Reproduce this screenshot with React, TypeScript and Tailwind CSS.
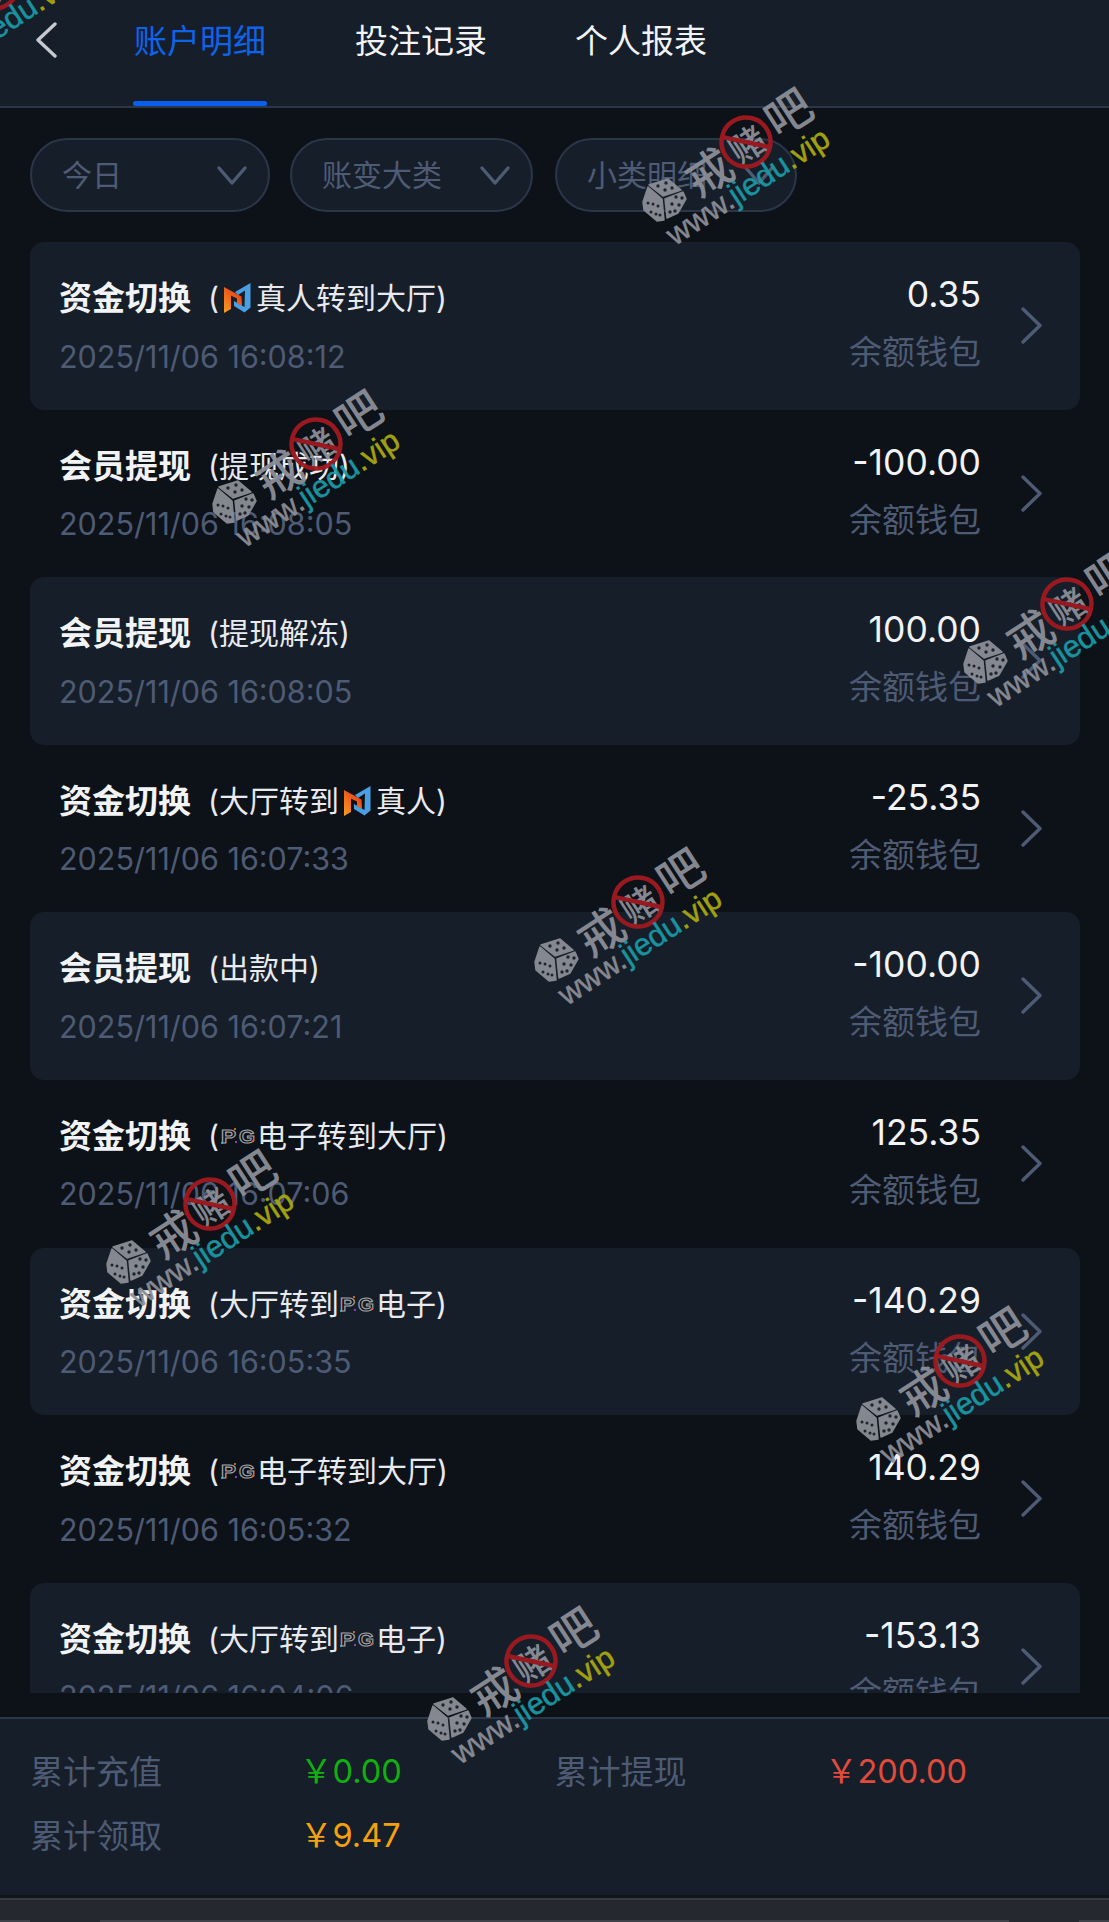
const rows = [
  { title: "资金切换", kind: "真人转到大厅", icon: "n-first", date: "2025/11/06 16:08:12", amount: "0.35" },
  { title: "会员提现", kind: "提现成功", date: "2025/11/06 16:08:05", amount: "-100.00" },
  { title: "会员提现", kind: "提现解冻", date: "2025/11/06 16:08:05", amount: "100.00" },
  { title: "资金切换", kind: "大厅转到|真人", icon: "n-mid", date: "2025/11/06 16:07:33", amount: "-25.35" },
  { title: "会员提现", kind: "出款中", date: "2025/11/06 16:07:21", amount: "-100.00" },
  { title: "资金切换", kind: "电子转到大厅", icon: "pg-first", date: "2025/11/06 16:07:06", amount: "125.35" },
  { title: "资金切换", kind: "大厅转到|电子", icon: "pg-mid", date: "2025/11/06 16:05:35", amount: "-140.29" },
  { title: "资金切换", kind: "电子转到大厅", icon: "pg-first", date: "2025/11/06 16:05:32", amount: "140.29" },
  { title: "资金切换", kind: "大厅转到|电子", icon: "pg-mid", date: "2025/11/06 16:04:06", amount: "-153.13" },
]

const marks = [
  "left-[-87px] top-[42px]",
  "left-[665px] top-[200px]",
  "left-[235px] top-[502px]",
  "left-[986px] top-[662px]",
  "left-[557px] top-[960px]",
  "left-[129px] top-[1262px]",
  "left-[879px] top-[1419px]",
  "left-[450px] top-[1719px]",
]

const NIcon = () => (
  <svg width="27" height="30" viewBox="0 0 27 30" className="shrink-0">
    <defs>
      <linearGradient id="nOrange" x1="0" y1="1" x2="0.7" y2="0">
        <stop offset="0" stopColor="#f8a020" />
        <stop offset="1" stopColor="#e63a1a" />
      </linearGradient>
    </defs>
    <path d="M26.5 0 L26.5 24.5 L20.5 29.5 L10 23 L10 18 L20.5 24 L21 7.5 L14 12 L11 9 Z" fill="#4a9fe0" />
    <path d="M0 4 L17.5 13.5 L18 23 L13 20 L13 15.5 L7 12.5 L7 26 L0 30 Z" fill="url(#nOrange)" />
  </svg>
)

const PgIcon = () => (
  <svg width="36" height="18" viewBox="0 0 36 18" className="shrink-0">
    <g fontSize="19" fontWeight="700" fontFamily="'Liberation Sans', sans-serif" fill="#0b0e14" stroke="#a4a4a8" strokeWidth="1.1">
      <text x="1" y="16" textLength="15" lengthAdjust="spacingAndGlyphs">P</text>
      <text x="19" y="16" textLength="16" lengthAdjust="spacingAndGlyphs">G</text>
    </g>
    <circle cx="2" cy="16" r="1" fill="#35c3e8" />
    <circle cx="15" cy="2" r="1" fill="#f08a24" />
    <circle cx="16" cy="15" r="1" fill="#b44fd8" />
    <circle cx="33" cy="14" r="1.1" fill="#f0552a" />
  </svg>
)

const Chevron = ({ dir, className }: { dir: "left" | "right" | "down"; className: string }) => {
  const d = dir === "left" ? "M20 2 L3 18 L20 34" : dir === "right" ? "M3 2 L20 18.5 L3 35" : "M2 2 L15 17 L28 2"
  const box = dir === "down" ? "0 0 30 19" : "0 0 23 37"
  return (
    <svg viewBox={box} fill="none" stroke="currentColor" strokeWidth="3.4" strokeLinecap="round" strokeLinejoin="round" className={className}>
      <path d={d} />
    </svg>
  )
}

const Dice = () => (
  <svg width="48" height="46" viewBox="0 0 48 46" className="absolute left-[-24px] top-[-23px]">
    <g fill="#8b8e96" stroke="#8b8e96" strokeWidth="1.5" strokeLinejoin="round">
      <path d="M8 8 L27 2 L40 13 L22 19 Z" />
      <path d="M42 15 L45 22 L37 36 L26 41 L24 22 Z" />
      <path d="M7 10 L21 22 L23 43 L16 44 L3 33 L2 25 Z" />
    </g>
    <g fill="#20242c">
      <circle cx="17" cy="9" r="1.7" /><circle cx="25" cy="6" r="1.7" /><circle cx="24" cy="13" r="1.7" /><circle cx="31" cy="11" r="1.7" />
      <circle cx="35" cy="20" r="1.7" /><circle cx="41" cy="21" r="1.7" /><circle cx="31" cy="27" r="1.7" /><circle cx="38" cy="28" r="1.7" /><circle cx="34" cy="34" r="1.7" /><circle cx="29" cy="35" r="1.7" />
      <circle cx="7" cy="26" r="1.5" /><circle cx="12" cy="27" r="1.5" /><circle cx="17" cy="29" r="1.5" /><circle cx="10" cy="35" r="1.5" /><circle cx="15" cy="37" r="1.5" /><circle cx="19" cy="38" r="1.5" />
    </g>
  </svg>
)

const Watermark = ({ place }: { place: string }) => (
  <div className={"absolute w-0 h-0 opacity-95 " + place}>
    <Dice />
    <div className="absolute left-0 top-0 w-0 h-0 rotate-[-33deg] font-['Noto_Sans_CJK_SC',sans-serif]">
      <div className="absolute left-[28px] top-[-26px] w-[48px] h-[48px] flex items-center justify-center text-[46px] leading-none font-medium text-[#8b8e96]">戒</div>
      <div className="absolute left-[127px] top-[-33px] w-[48px] h-[48px] flex items-center justify-center text-[46px] leading-none font-medium text-[#8b8e96]">吧</div>
      <div className="absolute left-[72px] top-[-32px] w-[55px] h-[55px] flex items-center justify-center text-[36px] leading-none font-medium text-[#8b8e96]">赌</div>
      <svg width="55" height="55" viewBox="0 0 55 55" className="absolute left-[72px] top-[-32px]">
        <circle cx="27.5" cy="27.5" r="24.5" fill="none" stroke="#a01a20" strokeWidth="4.5" />
        <path d="M10 10 L45 45" stroke="#a01a20" strokeWidth="4.5" />
      </svg>
      <div className="absolute left-[-17px] top-[16px] whitespace-nowrap text-[31px] leading-[36px] [-webkit-text-stroke:0.5px] font-['Liberation_Sans',sans-serif]">
        <span className="text-[#8b8e96]">www.</span>
        <span className="text-[#1a9aa5]">jiedu</span>
        <span className="text-[#a8a810]">.vip</span>
      </div>
    </div>
  </div>
)

const Kind = ({ kind, icon }: { kind: string; icon?: string }) => {
  const parts = kind.split("|")
  const isN = icon?.startsWith("n")
  const glyph = isN ? <NIcon /> : icon ? <PgIcon /> : null
  return (
    <div className="flex items-center ml-[17px] text-[30px] leading-[40px] text-[#e8eaee]">
      <span>(</span>
      {icon?.endsWith("first") && (
        <span className={isN ? "ml-[5px] mr-[5px] flex" : "ml-[1px] mr-[1px] flex"}>{glyph}</span>
      )}
      <span>{parts[0]}</span>
      {icon?.endsWith("mid") && (
        <span className={isN ? "ml-[5px] mr-[5px] flex" : "ml-[0px] mr-[1px] flex"}>{glyph}</span>
      )}
      {parts[1] && <span>{parts[1]}</span>}
      <span>)</span>
    </div>
  )
}

export default function App() {
  return (
    <div className="relative w-[1109px] h-[1922px] overflow-hidden flex flex-col bg-[#0d1118] font-['Inter','Noto_Sans_CJK_SC',sans-serif]">
      <div className="h-[108px] shrink-0 bg-[#161e2a] border-b-2 border-[#2b3648] flex items-start">
        <Chevron dir="left" className="w-[23px] h-[37px] ml-[35px] mt-[22px] text-[#c6c9cf]" />
        <div className="flex gap-[88px] ml-[75px]">
          <div className="flex flex-col items-center">
            <div className="text-[33px] leading-[42px] mt-[20px] text-[#0f63e8]">账户明细</div>
            <div className="w-[134px] h-[5px] mt-[39px] rounded-full bg-[#0b5ff0]" />
          </div>
          <div className="text-[33px] leading-[42px] mt-[20px] text-[#f2f3f5]">投注记录</div>
          <div className="text-[33px] leading-[42px] mt-[20px] text-[#f2f3f5]">个人报表</div>
        </div>
      </div>

      <div className="flex gap-[20px] pl-[30px] pt-[30px] pb-[30px] shrink-0">
        {["今日", "账变大类", "小类明细"].map((f, i) => (
          <div
            key={f}
            className={
              "h-[74px] rounded-full border-2 border-[#2b3648] bg-[#161e2a] flex items-center justify-between pl-[30px] pr-[21px] text-[30px] text-[#4e5b74] " +
              (i === 0 ? "w-[240px]" : i === 1 ? "w-[243px]" : "w-[242px] ml-[2px]")
            }
          >
            <span>{f}</span>
            <Chevron dir="down" className="w-[30px] h-[19px] text-[#4e5b74]" />
          </div>
        ))}
      </div>

      <div className="h-[1451px] shrink-0 overflow-hidden pl-[30px] pr-[29px]">
        {rows.map((r, i) => (
          <div
            key={i}
            className={"h-[167.6px] rounded-[14px] flex items-start " + (i % 2 === 0 ? "bg-[#161e2a]" : "")}
          >
            <div className="pl-[29px] flex-1">
              <div className="flex items-center mt-[36px] h-[40px]">
                <span className="text-[33px] leading-[40px] font-bold text-[#f2f3f5]">{r.title}</span>
                <Kind kind={r.kind} icon={r.icon} />
              </div>
              <div className="mt-[20.5px] text-[30.5px] leading-[36px] text-[#4e5b74]">{r.date}</div>
            </div>
            <div className="text-right">
              <div className="mt-[32px] text-[35.5px] leading-[42px] text-[#f2f3f5]">{r.amount}</div>
              <div className="mt-[15px] text-[33px] leading-[42px] text-[#4e5b74]">余额钱包</div>
            </div>
            <Chevron dir="right" className="w-[23px] h-[37px] ml-[39px] mr-[37px] mt-[65px] text-[#4e5b74]" />
          </div>
        ))}
      </div>

      <div className="h-[24px] shrink-0" />
      <div className="h-[178px] shrink-0 bg-[#161e2a] border-t-2 border-[#2b3648] pl-[30px] pt-[32px] grid grid-cols-[270px_254.5px_270.5px_1fr] auto-rows-[64px] text-[33px] leading-[42px]">
        <div className="text-[#4e5b74]">累计充值</div>
        <div className="text-[32.5px] text-[#10b010]">￥0.00</div>
        <div className="text-[#4e5b74]">累计提现</div>
        <div className="text-[32.5px] text-[#e04b3c]">￥200.00</div>
        <div className="text-[#4e5b74]">累计领取</div>
        <div className="text-[32.5px] text-[#f5a10f]">￥9.47</div>
      </div>
      <div className="h-[3px] shrink-0 bg-[#10141b]" />
      <div className="flex-1 bg-[#25282f] border-t-2 border-[#363a44] flex flex-col justify-end">
        <div className="h-[2px] bg-[#3e4147] flex justify-between px-[30px]">
          <div className="w-[70px] bg-[#25282f]" />
          <div className="w-[70px] bg-[#25282f]" />
        </div>
      </div>

      {marks.map((m) => (
        <Watermark key={m} place={m} />
      ))}
    </div>
  )
}
